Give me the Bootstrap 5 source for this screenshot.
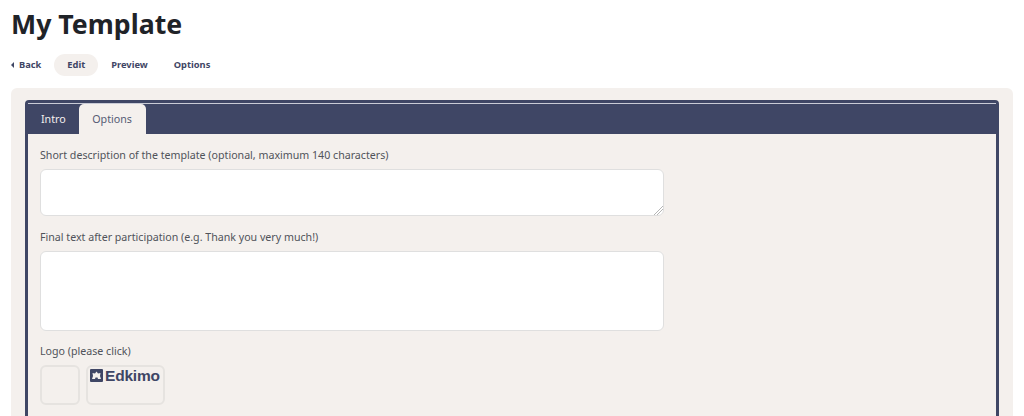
<!DOCTYPE html>
<html lang="en">
  <head>
    <meta charset="UTF-8" />
    <meta name="viewport" content="width=device-width, initial-scale=1.0" />
    <title>My Template</title>
    <link href="https://cdn.jsdelivr.net/npm/bootstrap@5.3.0/dist/css/bootstrap.min.css" rel="stylesheet" />
    <style>
      html, body {
        height: 416px;
        overflow: hidden;
      }
      body {
        font-family: "Noto Sans", "Liberation Sans", sans-serif;
        color: #212529;
        padding: 0 11px;
      }
      .page-title {
        font-size: 26.7px;
        font-weight: 700;
        line-height: 40px;
        margin: 4px 0 0;
        color: #1f2328;
      }
      .sub-nav {
        margin-top: 10px;
        height: 22px;
        font-size: 9.3px;
        font-weight: 700;
      }
      .sub-nav a {
        color: #3f4665;
        text-decoration: none;
        padding: 0 13px;
        line-height: 22px;
        border-radius: 11px;
      }
      .sub-nav a.back-link {
        padding: 0 13px 0 0;
      }
      .back-arrow {
        display: inline-block;
        border-style: solid;
        border-width: 3px 3px 3px 0;
        border-color: transparent #3f4665 transparent transparent;
        margin-right: 5px;
      }
      .sub-nav a.current {
        background: #f4f0ed;
      }
      .well-box {
        margin-top: 12px;
        background: #f4f0ed;
        border-radius: 6px;
        padding: 12px 14px 0;
        height: 340px;
      }
      .tab-card {
        border: 3px solid #3f4665;
        border-bottom: 0;
        border-radius: 4px 4px 0 0;
        background: #f4f0ed;
        height: 328px;
      }
      .tab-band {
        background: #3f4665;
        border-top: 1px solid #c9cbd6;
        height: 31px;
        padding: 0;
      }
      .tab-band .nav-link {
        font-size: 10.7px;
        line-height: 30px;
        padding: 0 13px;
        height: 30px;
        color: #f4f0ed;
        border-radius: 5px 5px 0 0;
      }
      .tab-band .nav-link.active {
        background: #f4f0ed;
        color: #555b74;
        padding: 0 13.5px;
      }
      .tab-body {
        padding: 13px 12px 0;
      }
      .field-label {
        font-size: 10.65px;
        line-height: 16px;
        color: #50535a;
        margin-bottom: 6px;
      }
      .field-box {
        width: 624px;
        border: 1px solid #dfdfdf;
        border-radius: 6px;
        background: #fff;
        display: block;
        padding: 4px 8px;
        outline: 0;
      }
      .box-short {
        height: 47px;
        margin-bottom: 13px;
      }
      .box-short::-webkit-resizer {
        background: linear-gradient(135deg, transparent 68%, #b5b5b5 68%, #b5b5b5 73%, transparent 73%, transparent 78%, #b5b5b5 78%, #b5b5b5 83%, transparent 83%);
      }
      .box-long {
        height: 80px;
        margin-bottom: 12px;
        resize: none;
      }
      .logo-row {
        gap: 6px;
      }
      .logo-choice {
        height: 40px;
        border: 2px solid #e6e3e0;
        border-radius: 6px;
      }
      .logo-empty {
        width: 40px;
      }
      .logo-edkimo {
        width: 79px;
        color: #3f4665;
        font-family: "Liberation Sans", sans-serif;
        font-size: 15.5px;
        font-weight: 700;
        line-height: 18px;
        padding: 0 0 0 2px;
        gap: 2px;
        letter-spacing: -0.2px;
      }
      .logo-edkimo svg {
        flex: none;
        margin-top: 2px;
      }
    </style>
  </head>
  <body>
    <h1 class="page-title">My Template</h1>
    <div class="sub-nav d-flex align-items-center">
      <a href="#" class="back-link"><span class="back-arrow"></span>Back</a>
      <a href="#" class="current">Edit</a>
      <a href="#">Preview</a>
      <a href="#">Options</a>
    </div>
    <div class="well-box">
      <div class="tab-card">
        <ul class="nav tab-band">
          <li class="nav-item"><a class="nav-link" href="#">Intro</a></li>
          <li class="nav-item"><a class="nav-link active" href="#">Options</a></li>
        </ul>
        <div class="tab-body">
          <div class="field-label">Short description of the template (optional, maximum 140 characters)</div>
          <textarea class="field-box box-short"></textarea>
          <div class="field-label">Final text after participation (e.g. Thank you very much!)</div>
          <textarea class="field-box box-long"></textarea>
          <div class="field-label">Logo (please click)</div>
          <div class="d-flex logo-row mt-1">
            <div class="logo-choice logo-empty"></div>
            <div class="logo-choice logo-edkimo d-flex">
              <svg width="13" height="13" viewBox="0 0 13 13">
                <rect width="13" height="13" rx="1" fill="#3f4665" />
                <path d="M6.5 2.5 L8 4.5 L10.5 4 L10 7 L11 10 L8 10 L7.5 8.5 L5.5 8.5 L5 10 L2 10 L3 7 L2.5 4 L5 4.5 Z" fill="#f4f0ed" />
              </svg>
              <span>Edkimo</span>
            </div>
          </div>
        </div>
      </div>
    </div>
    <script src="https://cdn.jsdelivr.net/npm/bootstrap@5.3.0/dist/js/bootstrap.bundle.min.js"></script>
  </body>
</html>
